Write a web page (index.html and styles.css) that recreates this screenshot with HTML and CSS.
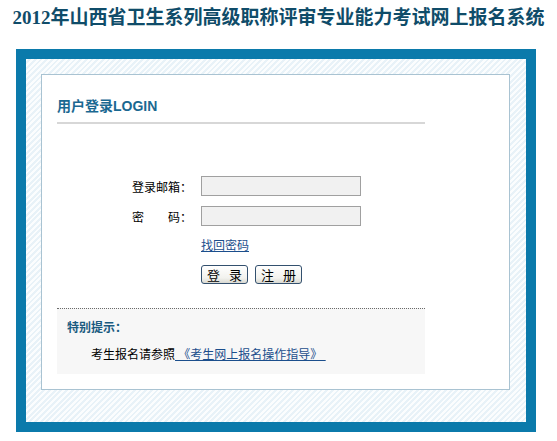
FILE: index.html
```html
<!DOCTYPE html>
<html lang="zh-CN">
<head>
    <meta charset="UTF-8">
    <meta name="viewport" content="width=device-width, initial-scale=1.0">
    <title>2012年山西省卫生系列高级职称评审专业能力考试网上报名系统</title>
    <link rel="stylesheet" href="styles.css">
</head>
<body>
    <h1 class="site-title">2012年山西省卫生系列高级职称评审专业能力考试网上报名系统</h1>

    <div class="frame">
        <div class="panel">
            <h2 class="login-title">用户登录LOGIN</h2>

            <form class="login-form" action="#" onsubmit="return false;">
                <div class="form-row">
                    <label class="field-label" for="email">登录邮箱：</label>
                    <input class="field-input" id="email" type="text">
                </div>
                <div class="form-row">
                    <label class="field-label spread" for="password"><span>密</span><span>码：</span></label>
                    <input class="field-input" id="password" type="password">
                </div>
                <div class="form-row link-row">
                    <span class="field-label"></span>
                    <a href="#" class="forgot-link">找回密码</a>
                </div>
                <div class="form-row button-row">
                    <span class="field-label"></span>
                    <button class="btn" type="submit">登 录</button>
                    <button class="btn" type="button">注 册</button>
                </div>
            </form>

            <div class="notice">
                <h3 class="notice-title">特别提示：</h3>
                <p class="notice-text">考生报名请参照<a href="#" class="notice-link">&nbsp;《考生网上报名操作指导》&nbsp;</a></p>
            </div>
        </div>
    </div>
</body>
</html>
```

FILE: styles.css
```css
body {
    margin: 0;
    background-color: #FFFFFF;
    font-family: "Liberation Sans", "Noto Sans CJK SC", sans-serif;
    font-size: 12px;
    color: #000000;
}

.site-title {
    margin: 0;
    padding-top: 5px;
    height: 44px;
    text-align: center;
    font-family: "Liberation Serif", "Noto Sans CJK SC", serif;
    font-size: 19px;
    line-height: 26px;
    font-weight: bold;
    color: #0f4c69;
}

.frame {
    width: 469px;
    margin-left: 16px;
    padding: 15px 16px 32px 15px;
    border: 10px solid #0b7aab;
    background: repeating-linear-gradient(135deg, #fbfdfe 0, #fbfdfe 2px, #e8f2f8 2px, #e8f2f8 4px);
}

.panel {
    border: 1px solid #a9c3d2;
    background-color: #FFFFFF;
    padding: 21px 0 15px 15px;
}

.login-title {
    width: 368px;
    margin: 0;
    padding-bottom: 6px;
    border-bottom: 2px solid #d7d7d7;
    font-size: 14px;
    line-height: 20px;
    font-weight: bold;
    color: #1a6891;
}

.login-form {
    padding: 52px 0 0 75px;
    height: 132px;
}

.form-row {
    display: flex;
    align-items: center;
    margin-bottom: 10px;
}

.field-label {
    width: 60px;
    margin-right: 9px;
    flex-shrink: 0;
    font-family: "Noto Sans CJK TC", sans-serif;
}

.spread {
    display: flex;
    justify-content: space-between;
}

.field-input {
    box-sizing: border-box;
    width: 160px;
    height: 20px;
    margin: 0;
    padding: 1px 3px;
    border: 1px solid #a0a0a0;
    background-color: #f1f1f1;
    font-size: 12px;
}

.link-row {
    height: 16px;
    margin-bottom: 13px;
}

.forgot-link {
    color: #1b4e8c;
    text-decoration: underline;
}

.btn {
    box-sizing: border-box;
    width: 47px;
    height: 19px;
    margin: 0 7px 0 0;
    padding: 0 0 0 3px;
    border: 1px solid #33506e;
    border-radius: 3px;
    background: linear-gradient(#ffffff, #f2f2ee 70%, #d9d9d2);
    font-family: "Noto Sans CJK SC", sans-serif;
    font-size: 13px;
    line-height: 16px;
    letter-spacing: 3px;
    color: #000000;
    cursor: pointer;
}

.notice {
    width: 368px;
    box-sizing: border-box;
    border-top: 1px dotted #6a6a6a;
    background-color: #f7f7f7;
    padding: 10px 10px 10px 10px;
}

.notice-title {
    margin: 0;
    font-size: 12px;
    line-height: 18px;
    font-weight: bold;
    color: #1a5b80;
}

.notice-text {
    margin: 9px 0 0 0;
    text-indent: 24px;
    line-height: 18px;
}

.notice-link {
    color: #1b4e8c;
    text-decoration: underline;
}
```
